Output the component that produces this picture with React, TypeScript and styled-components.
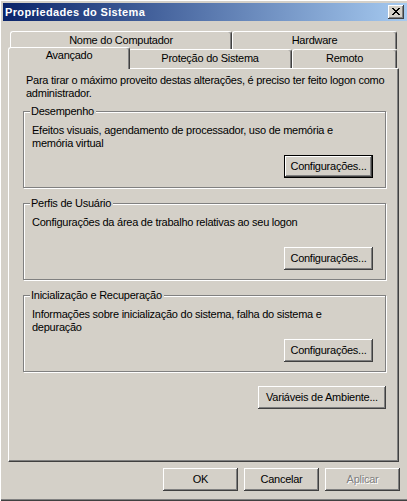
import React from "react";
import styled, { createGlobalStyle, css } from "styled-components";

const FACE = "#d4d0c8";
const SHADOW = "#808080";
const DARK = "#404040";
const LIGHT = "#ffffff";

const Global = createGlobalStyle`
  html, body { margin: 0; padding: 0; background: ${FACE}; overflow: hidden; }
  body {
    font-family: "Liberation Sans", Arial, sans-serif;
    font-size: 11px;
    letter-spacing: -0.25px;
    color: #000;
  }
  #root { width: 407px; height: 501px; }
`;

const Window = styled.div`
  box-sizing: border-box;
  width: 407px;
  height: 501px;
  background: ${FACE};
  padding: 3px 0 0 3px;
  box-shadow: inset 1px 1px 0 ${LIGHT}, inset 0 -1px 0 ${DARK}, inset 0 -2px 0 ${SHADOW};
  display: flex;
  flex-direction: column;
`;

const TitleBar = styled.div`
  height: 18px;
  display: flex;
  align-items: center;
  padding: 0 3px 0 2px;
  background: linear-gradient(to right, #0a246a, #a6caf0);
`;

const Title = styled.span`
  flex: 1;
  color: #fff;
  font-weight: bold;
  font-size: 11px;
  letter-spacing: 0.35px;
  line-height: 13px;
  white-space: nowrap;
`;

const raised = css`
  box-shadow: inset -1px -1px 0 ${DARK}, inset 1px 1px 0 ${LIGHT},
    inset -2px -2px 0 ${SHADOW}, inset 2px 2px 0 ${FACE};
`;

const CloseButton = styled.button`
  box-sizing: border-box;
  width: 16px;
  height: 14px;
  padding: 0 0 1px 0;
  border: none;
  background: ${FACE};
  ${raised};
  display: flex;
  align-items: center;
  justify-content: center;
`;

const Body = styled.div`
  flex: 1;
  display: flex;
  flex-direction: column;
  align-items: flex-start;
  padding: 10px 0 0 5px;
`;

const TabRow = styled.div<{ $h: number }>`
  display: flex;
  height: ${(p) => p.$h}px;
  width: 387px;
  margin-left: 2px;
`;

const Tab = styled.div<{ $w: number; $selected?: boolean }>`
  box-sizing: border-box;
  width: ${(p) => p.$w}px;
  background: ${FACE};
  border-top: 1px solid ${LIGHT};
  border-left: 1px solid ${LIGHT};
  border-right: 1px solid ${DARK};
  border-radius: 3px 3px 0 0;
  box-shadow: inset -1px 0 0 ${SHADOW};
  padding-top: 2px;
  line-height: 13px;
  text-align: center;
  white-space: nowrap;
  ${(p) =>
    p.$selected &&
    css`
      width: ${p.$w + 4}px;
      margin: -2px -2px -1px -2px;
      padding-top: 1px;
      position: relative;
      z-index: 1;
    `}
`;

const Panel = styled.div`
  box-sizing: border-box;
  width: 391px;
  height: 394px;
  border-top: 1px solid ${LIGHT};
  border-left: 1px solid ${LIGHT};
  border-right: 1px solid ${DARK};
  border-bottom: 1px solid ${DARK};
  box-shadow: inset -1px -1px 0 ${SHADOW};
  padding: 5px 12px 0 14px;
  display: flex;
  flex-direction: column;
`;

const Text = styled.p<{ $indent?: number }>`
  margin: 0 0 0 ${(p) => p.$indent ?? 0}px;
  line-height: 13px;
  white-space: nowrap;
`;

const Groups = styled.div`
  display: flex;
  flex-direction: column;
  gap: 15px;
  margin-top: 11px;
`;

const Group = styled.section`
  box-sizing: border-box;
  height: 77px;
  border: 1px solid ${SHADOW};
  box-shadow: inset 1px 1px 0 ${LIGHT}, 1px 1px 0 ${LIGHT};
  padding: 0 12px 9px 8px;
  display: flex;
  flex-direction: column;
`;

const GroupLabel = styled.div`
  align-self: flex-start;
  margin: -7px 0 0 -2px;
  padding: 0 2px 0 1px;
  background: ${FACE};
  line-height: 13px;
  white-space: nowrap;
`;

const GroupText = styled(Text)`
  margin-top: 6px;
`;

const ButtonLine = styled.div<{ $top?: number }>`
  display: flex;
  justify-content: flex-end;
  gap: 6px;
  margin-top: ${(p) => (p.$top === undefined ? "auto" : `${p.$top}px`)};
`;

const Button = styled.button<{ $w: number; $default?: boolean }>`
  box-sizing: border-box;
  width: ${(p) => p.$w}px;
  height: 23px;
  padding: 0;
  border: none;
  background: ${FACE};
  font: inherit;
  font-size: 11px;
  letter-spacing: -0.25px;
  line-height: 13px;
  color: #000;
  white-space: nowrap;
  ${raised};
  ${(p) =>
    p.$default &&
    css`
      border: 1px solid #000;
    `}
  &:disabled {
    color: ${SHADOW};
    text-shadow: 1px 1px 0 ${LIGHT};
  }
`;

const Footer = styled.div`
  display: flex;
  justify-content: flex-end;
  gap: 6px;
  width: 392px;
  margin-top: 6px;
`;

const CloseGlyph = () => (
  <svg width="8" height="7" viewBox="0 0 8 7" shapeRendering="crispEdges">
    <path
      fill="#000"
      d="M0 0h2v1H0z M6 0h2v1H6z M1 1h2v1H1z M5 1h2v1H5z M2 2h4v1H2z M3 3h2v1H3z M2 4h4v1H2z M1 5h2v1H1z M5 5h2v1H5z M0 6h2v1H0z M6 6h2v1H6z"
    />
  </svg>
);

export default function App() {
  return (
    <>
      <Global />
      <Window>
        <TitleBar>
          <Title>Propriedades do Sistema</Title>
          <CloseButton aria-label="Fechar">
            <CloseGlyph />
          </CloseButton>
        </TitleBar>
        <Body>
          <TabRow $h={18}>
            <Tab $w={222}>Nome do Computador</Tab>
            <Tab $w={165}>Hardware</Tab>
          </TabRow>
          <TabRow $h={19}>
            <Tab $w={118} $selected>
              Avançado
            </Tab>
            <Tab $w={164}>Proteção do Sistema</Tab>
            <Tab $w={105}>Remoto</Tab>
          </TabRow>
          <Panel>
            <Text $indent={3}>
              Para tirar o máximo proveito destas alterações, é preciso ter feito logon como
              <br />
              administrador.
            </Text>
            <Groups>
              <Group>
                <GroupLabel>Desempenho</GroupLabel>
                <GroupText>
                  Efeitos visuais, agendamento de processador, uso de memória e
                  <br />
                  memória virtual
                </GroupText>
                <ButtonLine>
                  <Button $w={89} $default>
                    Configurações...
                  </Button>
                </ButtonLine>
              </Group>
              <Group>
                <GroupLabel>Perfis de Usuário</GroupLabel>
                <GroupText>Configurações da área de trabalho relativas ao seu logon</GroupText>
                <ButtonLine>
                  <Button $w={89}>Configurações...</Button>
                </ButtonLine>
              </Group>
              <Group>
                <GroupLabel>Inicialização e Recuperação</GroupLabel>
                <GroupText>
                  Informações sobre inicialização do sistema, falha do sistema e
                  <br />
                  depuração
                </GroupText>
                <ButtonLine>
                  <Button $w={89}>Configurações...</Button>
                </ButtonLine>
              </Group>
            </Groups>
            <ButtonLine $top={14}>
              <Button $w={128}>Variáveis de Ambiente...</Button>
            </ButtonLine>
          </Panel>
          <Footer>
            <Button $w={75}>OK</Button>
            <Button $w={75}>Cancelar</Button>
            <Button $w={75} disabled>
              Aplicar
            </Button>
          </Footer>
        </Body>
      </Window>
    </>
  );
}
